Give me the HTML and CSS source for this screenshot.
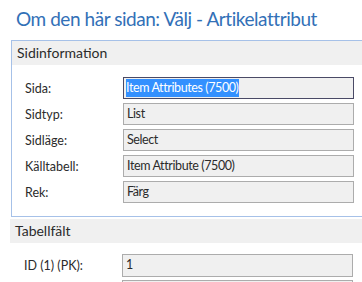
FILE: index.html
```html
<!DOCTYPE html>
<html>
<head>
<meta charset="utf-8">
<link rel="stylesheet" href="styles.css">
</head>
<body>
<h1 class="title">Om den här sidan: Välj - Artikelattribut</h1>
<section class="panel">
  <div class="panel-head">Sidinformation</div>
  <div class="fields">
    <div class="row"><span class="label">Sida:</span><div class="box focused"><span class="sel">Item Attributes (7500)</span></div></div>
    <div class="row"><span class="label">Sidtyp:</span><div class="box">List</div></div>
    <div class="row"><span class="label">Sidläge:</span><div class="box">Select</div></div>
    <div class="row"><span class="label">Källtabell:</span><div class="box">Item Attribute (7500)</div></div>
    <div class="row"><span class="label">Rek:</span><div class="box">Färg</div></div>
  </div>
</section>
<section class="section2">
  <div class="panel-head">Tabellfält</div>
  <div class="fields">
    <div class="row"><span class="label">ID (1) (PK):</span><div class="box">1</div></div>
    <div class="row"><span class="label"></span><div class="box"></div></div>
  </div>
</section>
</body>
</html>
```
FILE: styles.css
```css
html, body {
  margin: 0;
  padding: 0;
  background: #ffffff;
  overflow: hidden;
  width: 362px;
  height: 282px;
}
body {
  font-family: "Lato", "Open Sans", sans-serif;
  color: #2b2b2b;
}
.title {
  margin: 0;
  padding: 6px 0 0 16px;
  height: 35px;
  box-sizing: border-box;
  font-size: 19px;
  line-height: 26px;
  letter-spacing: -0.45px;
  font-weight: normal;
  color: #3270b7;
  white-space: nowrap;
}
.panel {
  margin: 5px 0 0 11px;
  width: 400px;
  border: 1px solid #a6c1e8;
  border-right: none;
  padding-bottom: 13px;
}
.panel-head {
  height: 24px;
  background: #f0f0f0;
  font-size: 14px;
  line-height: 24px;
  padding-left: 5px;
  color: #2b2b2b;
}
.fields {
  display: flex;
  flex-direction: column;
  gap: 4px;
  padding: 12px 0 0 13px;
}
.row {
  display: flex;
  align-items: center;
  height: 22px;
}
.label {
  width: 98px;
  font-size: 12.5px;
  color: #2b2b2b;
}
.box {
  box-sizing: border-box;
  width: 231px;
  height: 22px;
  background: #f0f0f0;
  border: 1px solid #acacac;
  font-size: 12.5px;
  letter-spacing: -0.4px;
  line-height: 20px;
  padding-left: 3px;
  color: #2b2b2b;
  white-space: nowrap;
}
.box.focused {
  border-color: #4a4a66;
  padding-left: 2px;
}
.sel {
  background: #3390ff;
  color: #ffffff;
  display: inline-block;
  line-height: 18px;
}
.section2 {
  margin: 2px 0 0 10px;
  width: 400px;
}
.section2 .fields {
  padding-left: 14px;
  padding-top: 11px;
  gap: 3px;
}
.section2 .row {
  height: 23px;
}
.section2 .box {
  height: 23px;
}
```
